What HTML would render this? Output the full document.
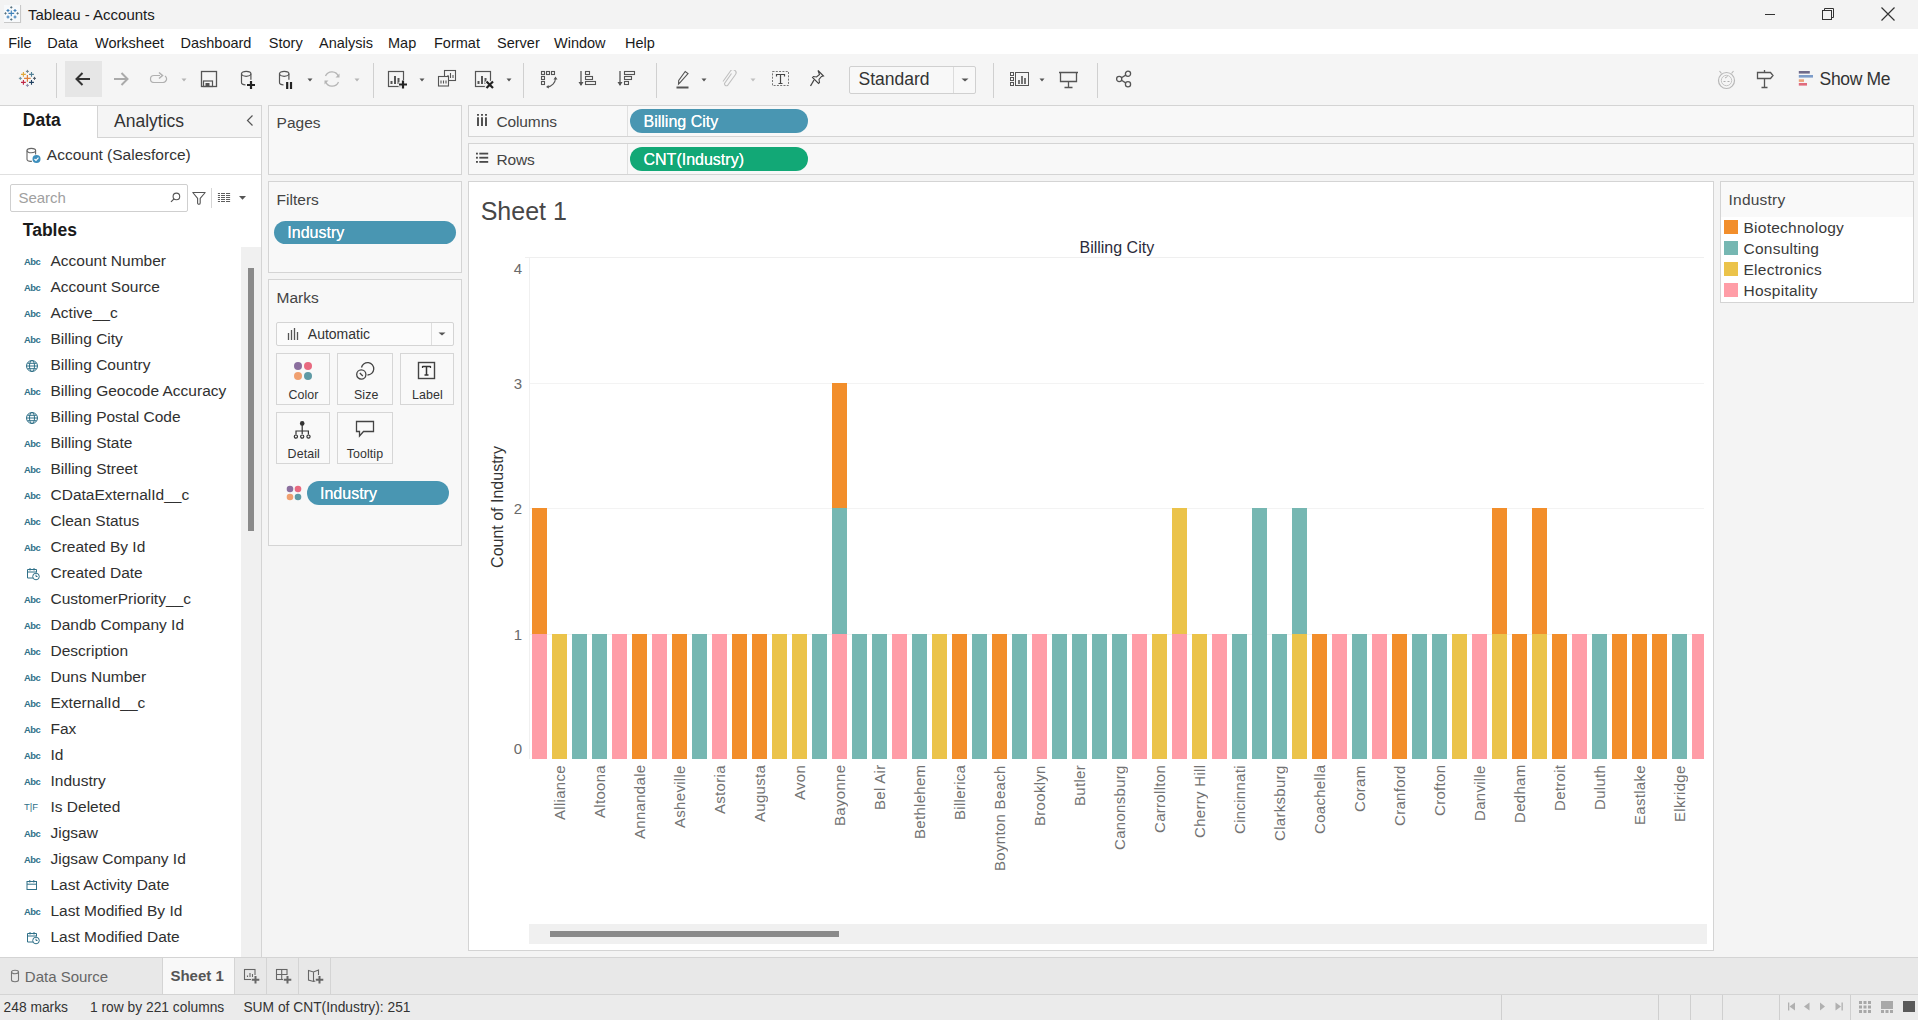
<!DOCTYPE html>
<html><head><meta charset="utf-8"><title>Tableau - Accounts</title>
<style>
html,body{margin:0;padding:0;}
body{width:1918px;height:1020px;position:relative;overflow:hidden;background:#f4f4f4;font-family:"Liberation Sans", sans-serif;}
.a{position:absolute;display:block;}
.t{position:absolute;white-space:nowrap;line-height:1;}
.xl{top:764.5px;height:160px;width:16px;font-size:15px;color:#727272;letter-spacing:0.3px;writing-mode:vertical-rl;transform:rotate(180deg);text-align:end;line-height:16px;}
</style></head><body>
<div class="a" style="left:0px;top:0px;width:1918px;height:29px;background:#f3f3f3;"></div>
<svg class="a" style="left:0px;top:0px;" width="24" height="26" viewBox="0 0 24 26"><path d="M20.5 5v17.5H4" fill="none" stroke="#c8c8c8" stroke-width="1.2"/><rect x="4" y="5" width="16" height="17" fill="#f7f9fb"/><g stroke="#3f80b8" stroke-width="1.1"><path d="M11.3 10.5v5.8M8.4 13.4h5.8"/><path d="M8 9v3M6.5 10.5h3M15 9v3M13.5 10.5h3M8 15.5v3M6.5 17h3M15 15.5v3M13.5 17h3"/></g><g stroke="#56707e" stroke-width="1"><path d="M11.3 6.3v2.2M10.2 7.4h2.2M11.3 18.4v2.2M10.2 19.5h2.2M5.5 12.3v2.2M4.4 13.4h2.2M17.6 12.3v2.2M16.5 13.4h2.2"/></g></svg>
<div class="t" style="top:7.30px;font-size:15px;color:#1a1a1a;left:28px;">Tableau - Accounts</div>
<svg class="a" style="left:1760px;top:6px;" width="20" height="16" viewBox="0 0 20 16"><path d="M5 8.5h10" stroke="#333" stroke-width="1"/></svg>
<svg class="a" style="left:1819px;top:6px;" width="20" height="16" viewBox="0 0 20 16"><rect x="3.5" y="4.5" width="9" height="9" fill="none" stroke="#333"/><path d="M5.5 4.5v-2h9v9h-2" fill="none" stroke="#333"/></svg>
<svg class="a" style="left:1878px;top:5px;" width="20" height="18" viewBox="0 0 20 18"><path d="M3.5 2.5l13 13M16.5 2.5l-13 13" stroke="#333" stroke-width="1.2"/></svg>
<div class="a" style="left:0px;top:29px;width:1918px;height:25px;background:#ffffff;"></div>
<div class="t" style="top:35.73px;font-size:14.5px;color:#1a1a1a;left:8.2px;">File</div>
<div class="t" style="top:35.73px;font-size:14.5px;color:#1a1a1a;left:47.2px;">Data</div>
<div class="t" style="top:35.73px;font-size:14.5px;color:#1a1a1a;left:95px;">Worksheet</div>
<div class="t" style="top:35.73px;font-size:14.5px;color:#1a1a1a;left:180.5px;">Dashboard</div>
<div class="t" style="top:35.73px;font-size:14.5px;color:#1a1a1a;left:268.8px;">Story</div>
<div class="t" style="top:35.73px;font-size:14.5px;color:#1a1a1a;left:319px;">Analysis</div>
<div class="t" style="top:35.73px;font-size:14.5px;color:#1a1a1a;left:388px;">Map</div>
<div class="t" style="top:35.73px;font-size:14.5px;color:#1a1a1a;left:434px;">Format</div>
<div class="t" style="top:35.73px;font-size:14.5px;color:#1a1a1a;left:497px;">Server</div>
<div class="t" style="top:35.73px;font-size:14.5px;color:#1a1a1a;left:554px;">Window</div>
<div class="t" style="top:35.73px;font-size:14.5px;color:#1a1a1a;left:625px;">Help</div>
<div class="a" style="left:0px;top:54px;width:1918px;height:51px;background:#f5f5f5;"></div>
<svg class="a" style="left:14px;top:66px;" width="28" height="24" viewBox="0 0 28 24"><path d="M10.10 12.35h6.60M13.40 9.05v6.60" stroke="#e0803a" stroke-width="1.2"/><path d="M7.00 8.35h4.80M9.40 5.95v4.80" stroke="#e0a83a" stroke-width="1.1"/><path d="M15.10 8.35h4.80M17.50 5.95v4.80" stroke="#4f7f95" stroke-width="1.1"/><path d="M7.00 16.35h4.80M9.40 13.95v4.80" stroke="#c02645" stroke-width="1.1"/><path d="M15.10 16.35h4.80M17.50 13.95v4.80" stroke="#1f3f60" stroke-width="1.1"/><path d="M11.90 5.40h3.00M13.40 3.90v3.00" stroke="#6a7f88" stroke-width="1.0"/><path d="M11.90 19.40h3.00M13.40 17.90v3.00" stroke="#8a8aaa" stroke-width="1.0"/><path d="M4.85 12.35h3.00M6.35 10.85v3.00" stroke="#6a8f9f" stroke-width="1.0"/><path d="M19.00 12.35h3.00M20.50 10.85v3.00" stroke="#4f5a66" stroke-width="1.0"/></svg>
<div class="a" style="left:56px;top:63px;width:1px;height:35px;background:#d0d0d0;"></div>
<div class="a" style="left:65px;top:61px;width:37px;height:36px;background:#e6e6e6;"></div>
<svg class="a" style="left:74px;top:71px;" width="18" height="16" viewBox="0 0 18 16"><path d="M16 8H2.5M8.5 2L2.5 8l6 6" fill="none" stroke="#333" stroke-width="2"/></svg>
<svg class="a" style="left:113px;top:71px;" width="18" height="16" viewBox="0 0 18 16"><path d="M1 8h13.5M8.5 2l6 6-6 6" fill="none" stroke="#aaa" stroke-width="2"/></svg>
<svg class="a" style="left:149px;top:71px;" width="20" height="12" viewBox="0 0 20 12"><path d="M11 4.5H5a3.5 3.5 0 0 0 0 7h9a3.5 3.5 0 0 0 2-6.4" fill="none" stroke="#b0b0b0" stroke-width="1.2"/><path d="M10 1.5l3.5 3-3.5 3" fill="none" stroke="#b0b0b0" stroke-width="1.5"/></svg>
<svg class="a" style="left:179.5px;top:76.5px;" width="8" height="6" viewBox="0 0 8 6"><path d="M1.5 1.5h5l-2.5 3z" fill="#b5b5b5"/></svg>
<svg class="a" style="left:200px;top:70px;" width="18" height="18" viewBox="0 0 18 18"><rect x="1.5" y="1.5" width="15" height="15" fill="none" stroke="#555" stroke-width="1.3"/><rect x="3.5" y="11" width="9" height="5.5" fill="none" stroke="#555" stroke-width="1.2"/><rect x="5.5" y="13" width="4" height="3.5" fill="#555"/></svg>
<svg class="a" style="left:239px;top:69px;" width="18" height="21" viewBox="0 0 18 21"><path d="M2.5 4.5v9a4 2 0 0 0 4 2.3" fill="none" stroke="#555" stroke-width="1.2"/><ellipse cx="7.2" cy="4.8" rx="4.7" ry="2.5" fill="none" stroke="#555" stroke-width="1.2"/><path d="M11.9 4.8v6" stroke="#555" stroke-width="1.2"/><path d="M12 12v8M8 16h8" stroke="#222" stroke-width="2.2"/></svg>
<svg class="a" style="left:277px;top:69px;" width="18" height="21" viewBox="0 0 18 21"><path d="M2.5 4.5v9a4 2 0 0 0 4 2.3" fill="none" stroke="#555" stroke-width="1.2"/><ellipse cx="7.2" cy="4.8" rx="4.7" ry="2.5" fill="none" stroke="#555" stroke-width="1.2"/><path d="M11.9 4.8v6" stroke="#555" stroke-width="1.2"/><path d="M10.2 13v7M14 13v7" stroke="#222" stroke-width="2.2"/></svg>
<svg class="a" style="left:305.5px;top:76.5px;" width="8" height="6" viewBox="0 0 8 6"><path d="M1.5 1.5h5l-2.5 3z" fill="#555"/></svg>
<svg class="a" style="left:322px;top:70px;" width="20" height="18" viewBox="0 0 20 18"><path d="M16.5 6.5A7 7 0 0 0 3.5 6M3.5 11.5A7 7 0 0 0 16.5 12" fill="none" stroke="#b5b5b5" stroke-width="1.3"/><path d="M17.5 3.5v4h-4z M2.5 14.5v-4h4z" fill="#b5b5b5"/></svg>
<svg class="a" style="left:353px;top:76.5px;" width="8" height="6" viewBox="0 0 8 6"><path d="M1.5 1.5h5l-2.5 3z" fill="#b5b5b5"/></svg>
<div class="a" style="left:373px;top:63px;width:1px;height:35px;background:#d0d0d0;"></div>
<svg class="a" style="left:387px;top:70px;" width="22" height="20" viewBox="0 0 22 20"><rect x="1.5" y="1.5" width="15" height="15" fill="none" stroke="#555" stroke-width="1.2"/><path d="M4.5 14v-3M8 14V6M11.5 14v-6" stroke="#555" stroke-width="2"/><path d="M16 10v9M11.5 14.5h9" stroke="#f5f5f5" stroke-width="4.5"/><path d="M16 10.5v8M12 14.5h8" stroke="#222" stroke-width="2.2"/></svg>
<svg class="a" style="left:417.5px;top:76.5px;" width="8" height="6" viewBox="0 0 8 6"><path d="M1.5 1.5h5l-2.5 3z" fill="#555"/></svg>
<svg class="a" style="left:437px;top:69px;" width="20" height="19" viewBox="0 0 20 19"><rect x="7.5" y="1.5" width="11" height="10" fill="#f5f5f5" stroke="#555" stroke-width="1.1"/><path d="M11 9V6M13.5 9V4M16 9V6" stroke="#555" stroke-width="1.1"/><rect x="1.5" y="7.5" width="10" height="9.5" fill="#f5f5f5" stroke="#555" stroke-width="1.1"/><path d="M4 14.5v-3M6.5 14.5v-3M9 14.5v-3" stroke="#555" stroke-width="1.1"/></svg>
<svg class="a" style="left:474px;top:70px;" width="22" height="20" viewBox="0 0 22 20"><rect x="1.5" y="1.5" width="15" height="15" fill="none" stroke="#555" stroke-width="1.2"/><path d="M4.5 14v-3M8 14V6M11.5 14v-6" stroke="#555" stroke-width="2"/><path d="M12 11l7.5 7.5M19.5 11L12 18.5" stroke="#f5f5f5" stroke-width="4.5"/><path d="M12.5 11.5l6.5 6.5M19 11.5l-6.5 6.5" stroke="#222" stroke-width="2.2"/></svg>
<svg class="a" style="left:504.5px;top:76.5px;" width="8" height="6" viewBox="0 0 8 6"><path d="M1.5 1.5h5l-2.5 3z" fill="#555"/></svg>
<div class="a" style="left:523px;top:63px;width:1px;height:35px;background:#d0d0d0;"></div>
<svg class="a" style="left:540px;top:70px;" width="19" height="20" viewBox="0 0 19 20"><g fill="none" stroke="#555" stroke-width="1.1"><rect x="1.5" y="1.5" width="3" height="3"/><rect x="6.5" y="1.5" width="3" height="3"/><rect x="11.5" y="1.5" width="3" height="3"/><rect x="1.5" y="6.5" width="3" height="3"/><rect x="1.5" y="11.5" width="3" height="3"/><path d="M15.5 8.5a9 9 0 0 1-8 8.5"/></g><path d="M13.5 9.5l2-3 2 3zM8.5 15l-2.5 2 3 1.5z" fill="#555"/></svg>
<svg class="a" style="left:578px;top:70px;" width="20" height="18" viewBox="0 0 20 18"><path d="M3 1v14" stroke="#555" stroke-width="1.3"/><path d="M0.5 12l2.5 4 2.5-4z" fill="#555"/><g fill="none" stroke="#555" stroke-width="1.1"><rect x="7.5" y="1.5" width="4" height="3"/><rect x="7.5" y="6.5" width="7" height="3"/><rect x="7.5" y="11.5" width="10" height="3"/></g></svg>
<svg class="a" style="left:617px;top:70px;" width="20" height="18" viewBox="0 0 20 18"><path d="M3 1v14" stroke="#555" stroke-width="1.3"/><path d="M0.5 12l2.5 4 2.5-4z" fill="#555"/><g fill="none" stroke="#555" stroke-width="1.1"><rect x="7.5" y="1.5" width="10" height="3"/><rect x="7.5" y="6.5" width="7" height="3"/><rect x="7.5" y="11.5" width="4" height="3"/></g></svg>
<div class="a" style="left:656px;top:63px;width:1px;height:35px;background:#d0d0d0;"></div>
<svg class="a" style="left:675px;top:70px;" width="16" height="20" viewBox="0 0 16 20"><path d="M5 12.5l-1.5 1.5 0.2-3.5 6.5-9 2.8 2z" fill="none" stroke="#555" stroke-width="1.1"/><path d="M1.5 17.5h12" stroke="#555" stroke-width="2"/></svg>
<svg class="a" style="left:700px;top:76.5px;" width="8" height="6" viewBox="0 0 8 6"><path d="M1.5 1.5h5l-2.5 3z" fill="#555"/></svg>
<svg class="a" style="left:721px;top:70px;" width="16" height="18" viewBox="0 0 16 18"><path d="M10.5 3.5l-7 10a2 2 0 0 0 3 2l8-11a3 3 0 0 0-5-3.5l-7.5 10.5" fill="none" stroke="#c0c0c0" stroke-width="1.1"/></svg>
<svg class="a" style="left:749px;top:76.5px;" width="8" height="6" viewBox="0 0 8 6"><path d="M1.5 1.5h5l-2.5 3z" fill="#c0c0c0"/></svg>
<svg class="a" style="left:771px;top:70px;" width="19" height="17" viewBox="0 0 19 17"><rect x="1.5" y="1.5" width="16" height="14" fill="none" stroke="#777" stroke-width="1" stroke-dasharray="2 1.3"/><path d="M5.5 4.5h8M9.5 4.5v9M7.5 13.5h4M5.5 4v2.5M13.5 4v2.5" stroke="#444" stroke-width="1.2" fill="none"/></svg>
<svg class="a" style="left:809px;top:69px;" width="16" height="19" viewBox="0 0 16 19"><path d="M9 1.5l5.5 5.5-2 0.5-2.5 3 0.5 3-1 1-6-6 1-1 3 0.5 3-2.5z" fill="none" stroke="#444" stroke-width="1.1"/><path d="M5 11l-3.5 6" stroke="#444" stroke-width="1.3"/></svg>
<div class="a" style="left:849px;top:66px;width:127px;height:28px;background:#f8f8f8;box-sizing:border-box;border:1px solid #d0d0d0;border-radius:2px;"></div>
<div class="a" style="left:953px;top:67px;width:1px;height:26px;background:#dcdcdc;"></div>
<div class="t" style="top:71.19px;font-size:17.5px;color:#333;left:858.5px;">Standard</div>
<svg class="a" style="left:960.5px;top:77px;" width="8" height="6" viewBox="0 0 8 6"><path d="M0.5 1.5h7l-3.5 3z" fill="#555"/></svg>
<div class="a" style="left:993px;top:63px;width:1px;height:35px;background:#d0d0d0;"></div>
<svg class="a" style="left:1008px;top:70px;" width="24" height="18" viewBox="0 0 24 18"><g fill="none" stroke="#555" stroke-width="1"><rect x="2.5" y="2.5" width="3" height="3"/><rect x="2.5" y="7.5" width="3" height="3"/><rect x="2.5" y="12.5" width="3" height="3"/><rect x="7.5" y="2.5" width="13" height="13"/></g><path d="M11 14v-4M14 14V6M17 14v-6" stroke="#555" stroke-width="1.6"/></svg>
<svg class="a" style="left:1037.5px;top:76.5px;" width="8" height="6" viewBox="0 0 8 6"><path d="M1.5 1.5h5l-2.5 3z" fill="#555"/></svg>
<svg class="a" style="left:1058px;top:70px;" width="21" height="19" viewBox="0 0 21 19"><path d="M1 2.5h19M2.5 2.5v9h16v-9M10.5 11.5v6M6.5 17.5h8" fill="none" stroke="#555" stroke-width="1.3"/></svg>
<div class="a" style="left:1097px;top:63px;width:1px;height:35px;background:#d0d0d0;"></div>
<svg class="a" style="left:1115px;top:70px;" width="18" height="18" viewBox="0 0 18 18"><g fill="none" stroke="#555" stroke-width="1.3"><circle cx="13" cy="3.8" r="2.6"/><circle cx="4.2" cy="9" r="2.6"/><circle cx="13" cy="14.2" r="2.6"/><path d="M6.5 7.7l4.2-2.6M6.5 10.3l4.2 2.6"/></g></svg>
<svg class="a" style="left:1716px;top:69px;" width="21" height="21" viewBox="0 0 21 21"><circle cx="10.5" cy="11.5" r="8" fill="none" stroke="#b8b8b8" stroke-width="1.2"/><path d="M3.5 2l2 2.5M17.5 2l-2 2.5" stroke="#b8b8b8" stroke-width="1.2"/><circle cx="10.5" cy="11.5" r="5.2" fill="none" stroke="#c4c4c4" stroke-width="1"/><path d="M7.5 12.5h2M11.5 12.5h2M9 9l2.5-1.5" stroke="#b0b0b0" stroke-width="1"/></svg>
<svg class="a" style="left:1755px;top:69px;" width="20" height="20" viewBox="0 0 20 20"><path d="M2.5 3.5h13l2.5 3-2.5 3h-13z" fill="none" stroke="#555" stroke-width="1.3"/><path d="M9.5 1v2.5M9.5 9.5v9M6.5 18.5h6" stroke="#555" stroke-width="1.3"/></svg>
<svg class="a" style="left:1797px;top:70px;" width="18" height="18" viewBox="0 0 18 18"><rect x="1.8" y="1" width="11" height="2.6" fill="#6f6a8a"/><rect x="1.8" y="5" width="14.2" height="2.6" fill="#7d9cc9"/><rect x="1.8" y="9.3" width="5.2" height="2.6" fill="#eba27a"/><rect x="1.8" y="13" width="8.2" height="2.6" fill="#e06b7d"/></svg>
<div class="t" style="top:71.39px;font-size:17.5px;color:#333;left:1819.6px;letter-spacing:-0.35px;">Show Me</div>
<div class="a" style="left:0px;top:105px;width:1918px;height:852px;background:#f4f4f4;"></div>
<div class="a" style="left:0px;top:105px;width:262px;height:852px;background:#ffffff;box-sizing:border-box;border:1px solid #d4d4d4;border-left:none;border-bottom:none;"></div>
<div class="a" style="left:97px;top:106px;width:164px;height:32px;background:#f5f5f5;box-sizing:border-box;border-left:1px solid #d4d4d4;border-bottom:1px solid #d4d4d4;"></div>
<div class="t" style="top:112.19px;font-size:17.5px;color:#1a1a1a;font-weight:bold;left:22.8px;">Data</div>
<div class="t" style="top:112.69px;font-size:17.5px;color:#333;left:114px;">Analytics</div>
<svg class="a" style="left:245px;top:114px;" width="10" height="13" viewBox="0 0 10 13"><path d="M7.5 1.5L2.5 6.5l5 5" fill="none" stroke="#555" stroke-width="1.2"/></svg>
<svg class="a" style="left:25px;top:147px;" width="17" height="17" viewBox="0 0 17 17"><path d="M2 3.5v9a4.3 2 0 0 0 5 1.8" fill="none" stroke="#666" stroke-width="1.1"/><ellipse cx="6.3" cy="3.6" rx="4.3" ry="2.2" fill="none" stroke="#666" stroke-width="1.1"/><path d="M10.6 3.6v4" stroke="#666" stroke-width="1.1"/><circle cx="11.5" cy="12" r="4" fill="#3d8fbd"/><path d="M9.5 12l1.5 1.5 2.5-2.8" fill="none" stroke="#fff" stroke-width="1.2"/></svg>
<div class="t" style="top:147.48px;font-size:15.5px;color:#333;left:46.8px;">Account (Salesforce)</div>
<div class="a" style="left:0px;top:174px;width:261px;height:1px;background:#e0e0e0;"></div>
<div class="a" style="left:10px;top:184px;width:178px;height:28px;background:#ffffff;box-sizing:border-box;border:1px solid #cfcfcf;border-radius:2px;"></div>
<div class="t" style="top:190.30px;font-size:15px;color:#a0a0a0;left:18.4px;">Search</div>
<svg class="a" style="left:169px;top:191px;" width="13" height="13" viewBox="0 0 13 13"><circle cx="7.4" cy="5.4" r="3.3" fill="none" stroke="#555" stroke-width="1.1"/><path d="M5 7.8L2 10.8" stroke="#555" stroke-width="1.2"/></svg>
<svg class="a" style="left:191px;top:191px;" width="16" height="14" viewBox="0 0 16 14"><path d="M1.8 1.5h12.4l-5 5.8v4.6a1.3 1.3 0 0 1-2.6 0V7.3z" fill="none" stroke="#555" stroke-width="1.1" stroke-linejoin="round"/></svg>
<div class="a" style="left:211px;top:188px;width:1px;height:20px;background:#d6d6d6;"></div>
<svg class="a" style="left:217px;top:192px;" width="14" height="11" viewBox="0 0 14 11"><g fill="#555"><rect x="0.9" y="1.05" width="2.1" height="0.95"/><rect x="4" y="1.05" width="4" height="0.95"/><rect x="9" y="1.05" width="4.1" height="0.95"/><rect x="0.9" y="3.05" width="2.1" height="0.95"/><rect x="4" y="3.05" width="4" height="0.95"/><rect x="9" y="3.05" width="4.1" height="0.95"/><rect x="0.9" y="5.05" width="2.1" height="0.95"/><rect x="4" y="5.05" width="4" height="0.95"/><rect x="9" y="5.05" width="4.1" height="0.95"/><rect x="0.9" y="7.05" width="2.1" height="0.95"/><rect x="4" y="7.05" width="4" height="0.95"/><rect x="9" y="7.05" width="4.1" height="0.95"/><rect x="0.9" y="9.05" width="2.1" height="0.95"/><rect x="4" y="9.05" width="4" height="0.95"/><rect x="9" y="9.05" width="4.1" height="0.95"/></g></svg>
<svg class="a" style="left:238px;top:195px;" width="9" height="6" viewBox="0 0 9 6"><path d="M1 1h7l-3.5 3.8z" fill="#555"/></svg>
<div class="t" style="top:221.99px;font-size:17.5px;color:#1a1a1a;font-weight:bold;left:22.8px;">Tables</div>
<div class="a" style="left:241px;top:247px;width:20px;height:710px;background:#f0f0f0;"></div>
<div class="a" style="left:248px;top:268px;width:6px;height:263px;background:#8a8a8a;"></div>
<div class="t" style="top:252.68px;font-size:15.5px;color:#303030;left:50.5px;">Account Number</div>
<div class="t" style="top:256.54px;font-size:9.4px;color:#2f7088;font-weight:bold;left:24px;letter-spacing:-0.55px;">Abc</div>
<div class="t" style="top:278.68px;font-size:15.5px;color:#303030;left:50.5px;">Account Source</div>
<div class="t" style="top:282.54px;font-size:9.4px;color:#2f7088;font-weight:bold;left:24px;letter-spacing:-0.55px;">Abc</div>
<div class="t" style="top:304.68px;font-size:15.5px;color:#303030;left:50.5px;">Active__c</div>
<div class="t" style="top:308.54px;font-size:9.4px;color:#2f7088;font-weight:bold;left:24px;letter-spacing:-0.55px;">Abc</div>
<div class="t" style="top:330.68px;font-size:15.5px;color:#303030;left:50.5px;">Billing City</div>
<div class="t" style="top:334.54px;font-size:9.4px;color:#2f7088;font-weight:bold;left:24px;letter-spacing:-0.55px;">Abc</div>
<div class="t" style="top:356.68px;font-size:15.5px;color:#303030;left:50.5px;">Billing Country</div>
<svg class="a" style="left:25px;top:358.8px;" width="14" height="14" viewBox="0 0 14 14"><g fill="none" stroke="#2f7088" stroke-width="1"><circle cx="7" cy="7" r="5.5"/><ellipse cx="7" cy="7" rx="2.5" ry="5.5"/><path d="M1.5 7h11M2.5 4.3h9M2.5 9.7h9"/></g></svg>
<div class="t" style="top:382.68px;font-size:15.5px;color:#303030;left:50.5px;">Billing Geocode Accuracy</div>
<div class="t" style="top:386.54px;font-size:9.4px;color:#2f7088;font-weight:bold;left:24px;letter-spacing:-0.55px;">Abc</div>
<div class="t" style="top:408.68px;font-size:15.5px;color:#303030;left:50.5px;">Billing Postal Code</div>
<svg class="a" style="left:25px;top:410.8px;" width="14" height="14" viewBox="0 0 14 14"><g fill="none" stroke="#2f7088" stroke-width="1"><circle cx="7" cy="7" r="5.5"/><ellipse cx="7" cy="7" rx="2.5" ry="5.5"/><path d="M1.5 7h11M2.5 4.3h9M2.5 9.7h9"/></g></svg>
<div class="t" style="top:434.68px;font-size:15.5px;color:#303030;left:50.5px;">Billing State</div>
<div class="t" style="top:438.54px;font-size:9.4px;color:#2f7088;font-weight:bold;left:24px;letter-spacing:-0.55px;">Abc</div>
<div class="t" style="top:460.68px;font-size:15.5px;color:#303030;left:50.5px;">Billing Street</div>
<div class="t" style="top:464.54px;font-size:9.4px;color:#2f7088;font-weight:bold;left:24px;letter-spacing:-0.55px;">Abc</div>
<div class="t" style="top:486.68px;font-size:15.5px;color:#303030;left:50.5px;">CDataExternalId__c</div>
<div class="t" style="top:490.54px;font-size:9.4px;color:#2f7088;font-weight:bold;left:24px;letter-spacing:-0.55px;">Abc</div>
<div class="t" style="top:512.68px;font-size:15.5px;color:#303030;left:50.5px;">Clean Status</div>
<div class="t" style="top:516.54px;font-size:9.4px;color:#2f7088;font-weight:bold;left:24px;letter-spacing:-0.55px;">Abc</div>
<div class="t" style="top:538.68px;font-size:15.5px;color:#303030;left:50.5px;">Created By Id</div>
<div class="t" style="top:542.54px;font-size:9.4px;color:#2f7088;font-weight:bold;left:24px;letter-spacing:-0.55px;">Abc</div>
<div class="t" style="top:564.68px;font-size:15.5px;color:#303030;left:50.5px;">Created Date</div>
<svg class="a" style="left:25px;top:565.8px;" width="16" height="15" viewBox="0 0 16 15"><g fill="none" stroke="#2f7088" stroke-width="1"><path d="M8 12H2.5V3.5h9v3"/><path d="M2.5 6h9M5 2v2.5M9 2v2.5"/><circle cx="11" cy="10.5" r="3.3"/><path d="M11 8.7v1.8h1.5"/></g></svg>
<div class="t" style="top:590.68px;font-size:15.5px;color:#303030;left:50.5px;">CustomerPriority__c</div>
<div class="t" style="top:594.54px;font-size:9.4px;color:#2f7088;font-weight:bold;left:24px;letter-spacing:-0.55px;">Abc</div>
<div class="t" style="top:616.68px;font-size:15.5px;color:#303030;left:50.5px;">Dandb Company Id</div>
<div class="t" style="top:620.54px;font-size:9.4px;color:#2f7088;font-weight:bold;left:24px;letter-spacing:-0.55px;">Abc</div>
<div class="t" style="top:642.68px;font-size:15.5px;color:#303030;left:50.5px;">Description</div>
<div class="t" style="top:646.54px;font-size:9.4px;color:#2f7088;font-weight:bold;left:24px;letter-spacing:-0.55px;">Abc</div>
<div class="t" style="top:668.68px;font-size:15.5px;color:#303030;left:50.5px;">Duns Number</div>
<div class="t" style="top:672.54px;font-size:9.4px;color:#2f7088;font-weight:bold;left:24px;letter-spacing:-0.55px;">Abc</div>
<div class="t" style="top:694.68px;font-size:15.5px;color:#303030;left:50.5px;">ExternalId__c</div>
<div class="t" style="top:698.54px;font-size:9.4px;color:#2f7088;font-weight:bold;left:24px;letter-spacing:-0.55px;">Abc</div>
<div class="t" style="top:720.68px;font-size:15.5px;color:#303030;left:50.5px;">Fax</div>
<div class="t" style="top:724.54px;font-size:9.4px;color:#2f7088;font-weight:bold;left:24px;letter-spacing:-0.55px;">Abc</div>
<div class="t" style="top:746.68px;font-size:15.5px;color:#303030;left:50.5px;">Id</div>
<div class="t" style="top:750.54px;font-size:9.4px;color:#2f7088;font-weight:bold;left:24px;letter-spacing:-0.55px;">Abc</div>
<div class="t" style="top:772.68px;font-size:15.5px;color:#303030;left:50.5px;">Industry</div>
<div class="t" style="top:776.54px;font-size:9.4px;color:#2f7088;font-weight:bold;left:24px;letter-spacing:-0.55px;">Abc</div>
<div class="t" style="top:798.68px;font-size:15.5px;color:#303030;left:50.5px;">Is Deleted</div>
<div class="t" style="top:802.16px;font-size:9.5px;color:#2f7088;left:24px;letter-spacing:0px;">T|F</div>
<div class="t" style="top:824.68px;font-size:15.5px;color:#303030;left:50.5px;">Jigsaw</div>
<div class="t" style="top:828.54px;font-size:9.4px;color:#2f7088;font-weight:bold;left:24px;letter-spacing:-0.55px;">Abc</div>
<div class="t" style="top:850.68px;font-size:15.5px;color:#303030;left:50.5px;">Jigsaw Company Id</div>
<div class="t" style="top:854.54px;font-size:9.4px;color:#2f7088;font-weight:bold;left:24px;letter-spacing:-0.55px;">Abc</div>
<div class="t" style="top:876.68px;font-size:15.5px;color:#303030;left:50.5px;">Last Activity Date</div>
<svg class="a" style="left:25px;top:877.8px;" width="14" height="14" viewBox="0 0 14 14"><g fill="none" stroke="#2f7088" stroke-width="1"><rect x="2" y="3.5" width="9.5" height="8"/><path d="M2 6.2h9.5M4.8 2v2.5M8.8 2v2.5"/></g></svg>
<div class="t" style="top:902.68px;font-size:15.5px;color:#303030;left:50.5px;">Last Modified By Id</div>
<div class="t" style="top:906.54px;font-size:9.4px;color:#2f7088;font-weight:bold;left:24px;letter-spacing:-0.55px;">Abc</div>
<div class="t" style="top:928.68px;font-size:15.5px;color:#303030;left:50.5px;">Last Modified Date</div>
<svg class="a" style="left:25px;top:929.8px;" width="16" height="15" viewBox="0 0 16 15"><g fill="none" stroke="#2f7088" stroke-width="1"><path d="M8 12H2.5V3.5h9v3"/><path d="M2.5 6h9M5 2v2.5M9 2v2.5"/><circle cx="11" cy="10.5" r="3.3"/><path d="M11 8.7v1.8h1.5"/></g></svg>
<div class="a" style="left:268px;top:105px;width:194px;height:70px;background:#f8f8f8;box-sizing:border-box;border:1px solid #d4d4d4;"></div>
<div class="t" style="top:114.88px;font-size:15.5px;color:#444;left:276.6px;">Pages</div>
<div class="a" style="left:268px;top:181px;width:194px;height:92px;background:#f8f8f8;box-sizing:border-box;border:1px solid #d4d4d4;"></div>
<div class="t" style="top:191.88px;font-size:15.5px;color:#444;left:276.6px;">Filters</div>
<div class="a" style="left:274px;top:220.5px;width:182px;height:23px;background:#4996b2;border-radius:11.5px;"></div>
<div class="t" style="top:224.76px;font-size:16px;color:#ffffff;left:287.3px;text-shadow:0 0 0.4px #fff;">Industry</div>
<div class="a" style="left:268px;top:279px;width:194px;height:267px;background:#f8f8f8;box-sizing:border-box;border:1px solid #d4d4d4;"></div>
<div class="t" style="top:290.38px;font-size:15.5px;color:#444;left:276.5px;">Marks</div>
<div class="a" style="left:276px;top:322px;width:178px;height:24px;background:#fbfbfb;box-sizing:border-box;border:1px solid #d4d4d4;border-radius:2px;"></div>
<div class="a" style="left:431px;top:323px;width:1px;height:22px;background:#dedede;"></div>
<svg class="a" style="left:287px;top:327px;" width="13" height="14" viewBox="0 0 13 14"><path d="M1.5 13V6M4.5 13V3M7.5 13V1M10.5 13V5" stroke="#555" stroke-width="1.3"/></svg>
<div class="t" style="top:327.45px;font-size:14px;color:#333;left:307.8px;">Automatic</div>
<svg class="a" style="left:438px;top:331px;" width="8" height="6" viewBox="0 0 8 6"><path d="M0.5 1.5h7l-3.5 3z" fill="#555"/></svg>
<div class="a" style="left:276px;top:353px;width:54px;height:52px;background:#f9f9f9;box-sizing:border-box;border:1px solid #d6d6d6;"></div>
<div class="t" style="top:388.50px;font-size:12.4px;color:#333;left:288.4px;letter-spacing:0.1px;">Color</div>

<svg class="a" style="left:293px;top:361px;" width="20" height="20" viewBox="0 0 20 20"><circle cx="5" cy="5" r="4" fill="#8b6f9e"/><circle cx="15" cy="5" r="4" fill="#e86a80"/><circle cx="5" cy="15" r="4" fill="#f0a070"/><circle cx="15" cy="15" r="4" fill="#5f9aa5"/></svg>
<div class="a" style="left:337px;top:353px;width:56px;height:52px;background:#f9f9f9;box-sizing:border-box;border:1px solid #d6d6d6;"></div>
<div class="t" style="top:388.50px;font-size:12.4px;color:#333;left:354px;letter-spacing:0.1px;">Size</div>

<svg class="a" style="left:355px;top:361px;" width="20" height="20" viewBox="0 0 20 20"><path d="M6.5 6.5A6.2 6.2 0 1 1 12.5 14" fill="none" stroke="#444" stroke-width="1.3"/><circle cx="6.3" cy="13.5" r="4.6" fill="none" stroke="#444" stroke-width="1.3"/><path d="M4.8 12l3 3" stroke="#444" stroke-width="1.2"/></svg>
<div class="a" style="left:400px;top:353px;width:54px;height:52px;background:#f9f9f9;box-sizing:border-box;border:1px solid #d6d6d6;"></div>
<div class="t" style="top:388.50px;font-size:12.4px;color:#333;left:412px;letter-spacing:0.1px;">Label</div>

<svg class="a" style="left:417px;top:361px;" width="19" height="19" viewBox="0 0 19 19"><rect x="1.5" y="1.5" width="16" height="16" fill="none" stroke="#444" stroke-width="1.4"/><path d="M5.5 5.5h8M9.5 5.5v8.5M7.5 14h4" fill="none" stroke="#333" stroke-width="1.5"/><path d="M5.5 5v2M13.5 5v2" stroke="#333" stroke-width="1.2"/></svg>
<div class="a" style="left:276px;top:412px;width:54px;height:52px;background:#f9f9f9;box-sizing:border-box;border:1px solid #d6d6d6;"></div>
<div class="t" style="top:447.50px;font-size:12.4px;color:#333;left:287.6px;letter-spacing:0.1px;">Detail</div>

<svg class="a" style="left:292px;top:419px;" width="20" height="21" viewBox="0 0 20 21"><circle cx="10.2" cy="4.4" r="2.3" fill="#333"/><path d="M10.2 6v9M4 15.5v-3.5h12.4v3.5" fill="none" stroke="#333" stroke-width="1.2"/><circle cx="3.9" cy="17.6" r="1.6" fill="none" stroke="#333" stroke-width="1.2"/><circle cx="10.2" cy="17.6" r="1.6" fill="none" stroke="#333" stroke-width="1.2"/><circle cx="16.5" cy="17.6" r="1.6" fill="none" stroke="#333" stroke-width="1.2"/></svg>
<div class="a" style="left:337px;top:412px;width:56px;height:52px;background:#f9f9f9;box-sizing:border-box;border:1px solid #d6d6d6;"></div>
<div class="t" style="top:447.50px;font-size:12.4px;color:#333;left:346.7px;letter-spacing:0.1px;">Tooltip</div>

<svg class="a" style="left:355px;top:420px;" width="20" height="18" viewBox="0 0 20 18"><path d="M1.5 1.5h17v10h-10l-4 4.5v-4.5h-3z" fill="none" stroke="#444" stroke-width="1.3"/></svg>
<svg class="a" style="left:286px;top:485px;" width="16" height="16" viewBox="0 0 16 16"><circle cx="4" cy="4" r="3.3" fill="#8b6f9e"/><circle cx="12" cy="4" r="3.3" fill="#e86a80"/><circle cx="4" cy="12" r="3.3" fill="#f0a070"/><circle cx="12" cy="12" r="3.3" fill="#5f9aa5"/></svg>
<div class="a" style="left:307px;top:481px;width:142px;height:24px;background:#4996b2;border-radius:12.0px;"></div>
<div class="t" style="top:485.76px;font-size:16px;color:#ffffff;left:320px;text-shadow:0 0 0.4px #fff;">Industry</div>
<div class="a" style="left:468px;top:105px;width:1446px;height:32px;background:#f8f8f8;box-sizing:border-box;border:1px solid #d4d4d4;"></div>
<div class="a" style="left:627px;top:106px;width:1px;height:30px;background:#e0e0e0;"></div>
<svg class="a" style="left:476px;top:113px;" width="12" height="14" viewBox="0 0 12 14"><path d="M2 4.2v8.8M6 4.2v8.8M10 4.2v8.8" stroke="#4a4a4a" stroke-width="1.9"/><path d="M2 1v1.7M6 1v1.7M10 1v1.7" stroke="#4a4a4a" stroke-width="1.9"/></svg>
<div class="t" style="top:113.88px;font-size:15.5px;color:#444;left:496.4px;letter-spacing:-0.1px;">Columns</div>
<div class="a" style="left:630px;top:109px;width:178px;height:24px;background:#4996b2;border-radius:12.0px;"></div>
<div class="t" style="top:113.76px;font-size:16px;color:#ffffff;left:643.5px;text-shadow:0 0 0.4px #fff;">Billing City</div>
<div class="a" style="left:468px;top:143px;width:1446px;height:32px;background:#f8f8f8;box-sizing:border-box;border:1px solid #d4d4d4;"></div>
<div class="a" style="left:627px;top:144px;width:1px;height:30px;background:#e0e0e0;"></div>
<svg class="a" style="left:476px;top:152px;" width="14" height="12" viewBox="0 0 14 12"><g fill="#4a4a4a"><rect x="0" y="0.7" width="1.9" height="1.8"/><rect x="3.3" y="0.7" width="8.9" height="1.8"/><rect x="0" y="4.8" width="1.9" height="1.8"/><rect x="3.3" y="4.8" width="8.9" height="1.8"/><rect x="0" y="9" width="1.9" height="1.8"/><rect x="3.3" y="9" width="8.9" height="1.8"/></g></svg>
<div class="t" style="top:151.88px;font-size:15.5px;color:#444;left:496.4px;letter-spacing:-0.1px;">Rows</div>
<div class="a" style="left:630px;top:147px;width:178px;height:24px;background:#12a876;border-radius:12.0px;"></div>
<div class="t" style="top:151.76px;font-size:16px;color:#ffffff;left:643.5px;text-shadow:0 0 0.4px #fff;">CNT(Industry)</div>
<div class="a" style="left:468px;top:181px;width:1246px;height:770px;background:#ffffff;box-sizing:border-box;border:1px solid #d4d4d4;"></div>
<div class="t" style="top:199.34px;font-size:25px;color:#474747;left:480.7px;">Sheet 1</div>
<div class="t" style="top:240.26px;font-size:16px;color:#2b2b3b;left:616.8px;width:1000px;text-align:center;">Billing City</div>
<div class="a" style="left:525px;top:257px;width:1179px;height:1px;background:#efefef;"></div>
<div class="a" style="left:529px;top:634px;width:1175px;height:1px;background:#f3f3f3;"></div>
<div class="a" style="left:529px;top:508px;width:1175px;height:1px;background:#f3f3f3;"></div>
<div class="a" style="left:529px;top:383px;width:1175px;height:1px;background:#f3f3f3;"></div>
<div class="a" style="left:529px;top:258px;width:1px;height:501px;background:#f0f0f0;"></div>
<div class="t" style="top:261.30px;font-size:15px;color:#6a6a6a;right:1396px;">4</div>
<div class="t" style="top:376.00px;font-size:15px;color:#6a6a6a;right:1396px;">3</div>
<div class="t" style="top:501.30px;font-size:15px;color:#6a6a6a;right:1396px;">2</div>
<div class="t" style="top:626.60px;font-size:15px;color:#6a6a6a;right:1396px;">1</div>
<div class="t" style="top:740.90px;font-size:15px;color:#6a6a6a;right:1396px;">0</div>
<div class="t" style="left:498px;top:506.8px;font-size:16px;color:#333;transform:translate(-50%,-50%) rotate(-90deg);white-space:nowrap;line-height:16px;">Count of Industry</div>
<div class="a" style="left:532px;top:634px;width:15px;height:125px;background:#ff9da7;"></div>
<div class="a" style="left:532px;top:508px;width:15px;height:126px;background:#f28e2b;"></div>
<div class="a" style="left:552px;top:634px;width:15px;height:125px;background:#ebc34a;"></div>
<div class="a" style="left:572px;top:634px;width:15px;height:125px;background:#76b7b2;"></div>
<div class="a" style="left:592px;top:634px;width:15px;height:125px;background:#76b7b2;"></div>
<div class="a" style="left:612px;top:634px;width:15px;height:125px;background:#ff9da7;"></div>
<div class="a" style="left:632px;top:634px;width:15px;height:125px;background:#f28e2b;"></div>
<div class="a" style="left:652px;top:634px;width:15px;height:125px;background:#ff9da7;"></div>
<div class="a" style="left:672px;top:634px;width:15px;height:125px;background:#f28e2b;"></div>
<div class="a" style="left:692px;top:634px;width:15px;height:125px;background:#76b7b2;"></div>
<div class="a" style="left:712px;top:634px;width:15px;height:125px;background:#ff9da7;"></div>
<div class="a" style="left:732px;top:634px;width:15px;height:125px;background:#f28e2b;"></div>
<div class="a" style="left:752px;top:634px;width:15px;height:125px;background:#f28e2b;"></div>
<div class="a" style="left:772px;top:634px;width:15px;height:125px;background:#ebc34a;"></div>
<div class="a" style="left:792px;top:634px;width:15px;height:125px;background:#ebc34a;"></div>
<div class="a" style="left:812px;top:634px;width:15px;height:125px;background:#76b7b2;"></div>
<div class="a" style="left:832px;top:634px;width:15px;height:125px;background:#ff9da7;"></div>
<div class="a" style="left:832px;top:508px;width:15px;height:126px;background:#76b7b2;"></div>
<div class="a" style="left:832px;top:383px;width:15px;height:125px;background:#f28e2b;"></div>
<div class="a" style="left:852px;top:634px;width:15px;height:125px;background:#76b7b2;"></div>
<div class="a" style="left:872px;top:634px;width:15px;height:125px;background:#76b7b2;"></div>
<div class="a" style="left:892px;top:634px;width:15px;height:125px;background:#ff9da7;"></div>
<div class="a" style="left:912px;top:634px;width:15px;height:125px;background:#76b7b2;"></div>
<div class="a" style="left:932px;top:634px;width:15px;height:125px;background:#ebc34a;"></div>
<div class="a" style="left:952px;top:634px;width:15px;height:125px;background:#f28e2b;"></div>
<div class="a" style="left:972px;top:634px;width:15px;height:125px;background:#76b7b2;"></div>
<div class="a" style="left:992px;top:634px;width:15px;height:125px;background:#f28e2b;"></div>
<div class="a" style="left:1012px;top:634px;width:15px;height:125px;background:#76b7b2;"></div>
<div class="a" style="left:1032px;top:634px;width:15px;height:125px;background:#ff9da7;"></div>
<div class="a" style="left:1052px;top:634px;width:15px;height:125px;background:#76b7b2;"></div>
<div class="a" style="left:1072px;top:634px;width:15px;height:125px;background:#76b7b2;"></div>
<div class="a" style="left:1092px;top:634px;width:15px;height:125px;background:#76b7b2;"></div>
<div class="a" style="left:1112px;top:634px;width:15px;height:125px;background:#76b7b2;"></div>
<div class="a" style="left:1132px;top:634px;width:15px;height:125px;background:#ff9da7;"></div>
<div class="a" style="left:1152px;top:634px;width:15px;height:125px;background:#ebc34a;"></div>
<div class="a" style="left:1172px;top:634px;width:15px;height:125px;background:#ff9da7;"></div>
<div class="a" style="left:1172px;top:508px;width:15px;height:126px;background:#ebc34a;"></div>
<div class="a" style="left:1192px;top:634px;width:15px;height:125px;background:#ebc34a;"></div>
<div class="a" style="left:1212px;top:634px;width:15px;height:125px;background:#ff9da7;"></div>
<div class="a" style="left:1232px;top:634px;width:15px;height:125px;background:#76b7b2;"></div>
<div class="a" style="left:1252px;top:634px;width:15px;height:125px;background:#76b7b2;"></div>
<div class="a" style="left:1252px;top:508px;width:15px;height:126px;background:#76b7b2;"></div>
<div class="a" style="left:1272px;top:634px;width:15px;height:125px;background:#76b7b2;"></div>
<div class="a" style="left:1292px;top:634px;width:15px;height:125px;background:#ebc34a;"></div>
<div class="a" style="left:1292px;top:508px;width:15px;height:126px;background:#76b7b2;"></div>
<div class="a" style="left:1312px;top:634px;width:15px;height:125px;background:#f28e2b;"></div>
<div class="a" style="left:1332px;top:634px;width:15px;height:125px;background:#ff9da7;"></div>
<div class="a" style="left:1352px;top:634px;width:15px;height:125px;background:#76b7b2;"></div>
<div class="a" style="left:1372px;top:634px;width:15px;height:125px;background:#ff9da7;"></div>
<div class="a" style="left:1392px;top:634px;width:15px;height:125px;background:#f28e2b;"></div>
<div class="a" style="left:1412px;top:634px;width:15px;height:125px;background:#76b7b2;"></div>
<div class="a" style="left:1432px;top:634px;width:15px;height:125px;background:#76b7b2;"></div>
<div class="a" style="left:1452px;top:634px;width:15px;height:125px;background:#ebc34a;"></div>
<div class="a" style="left:1472px;top:634px;width:15px;height:125px;background:#ff9da7;"></div>
<div class="a" style="left:1492px;top:634px;width:15px;height:125px;background:#ebc34a;"></div>
<div class="a" style="left:1492px;top:508px;width:15px;height:126px;background:#f28e2b;"></div>
<div class="a" style="left:1512px;top:634px;width:15px;height:125px;background:#f28e2b;"></div>
<div class="a" style="left:1532px;top:634px;width:15px;height:125px;background:#ebc34a;"></div>
<div class="a" style="left:1532px;top:508px;width:15px;height:126px;background:#f28e2b;"></div>
<div class="a" style="left:1552px;top:634px;width:15px;height:125px;background:#f28e2b;"></div>
<div class="a" style="left:1572px;top:634px;width:15px;height:125px;background:#ff9da7;"></div>
<div class="a" style="left:1592px;top:634px;width:15px;height:125px;background:#76b7b2;"></div>
<div class="a" style="left:1612px;top:634px;width:15px;height:125px;background:#f28e2b;"></div>
<div class="a" style="left:1632px;top:634px;width:15px;height:125px;background:#f28e2b;"></div>
<div class="a" style="left:1652px;top:634px;width:15px;height:125px;background:#f28e2b;"></div>
<div class="a" style="left:1672px;top:634px;width:15px;height:125px;background:#76b7b2;"></div>
<div class="a" style="left:1692px;top:634px;width:12px;height:125px;background:#ff9da7;"></div>
<div class="t xl" style="left:551.5px;">Alliance</div>
<div class="t xl" style="left:591.5px;">Altoona</div>
<div class="t xl" style="left:631.5px;">Annandale</div>
<div class="t xl" style="left:671.5px;">Asheville</div>
<div class="t xl" style="left:711.5px;">Astoria</div>
<div class="t xl" style="left:751.5px;">Augusta</div>
<div class="t xl" style="left:791.5px;">Avon</div>
<div class="t xl" style="left:831.5px;">Bayonne</div>
<div class="t xl" style="left:871.5px;">Bel Air</div>
<div class="t xl" style="left:911.5px;">Bethlehem</div>
<div class="t xl" style="left:951.5px;">Billerica</div>
<div class="t xl" style="left:991.5px;">Boynton Beach</div>
<div class="t xl" style="left:1031.5px;">Brooklyn</div>
<div class="t xl" style="left:1071.5px;">Butler</div>
<div class="t xl" style="left:1111.5px;">Canonsburg</div>
<div class="t xl" style="left:1151.5px;">Carrollton</div>
<div class="t xl" style="left:1191.5px;">Cherry Hill</div>
<div class="t xl" style="left:1231.5px;">Cincinnati</div>
<div class="t xl" style="left:1271.5px;">Clarksburg</div>
<div class="t xl" style="left:1311.5px;">Coachella</div>
<div class="t xl" style="left:1351.5px;">Coram</div>
<div class="t xl" style="left:1391.5px;">Cranford</div>
<div class="t xl" style="left:1431.5px;">Crofton</div>
<div class="t xl" style="left:1471.5px;">Danville</div>
<div class="t xl" style="left:1511.5px;">Dedham</div>
<div class="t xl" style="left:1551.5px;">Detroit</div>
<div class="t xl" style="left:1591.5px;">Duluth</div>
<div class="t xl" style="left:1631.5px;">Eastlake</div>
<div class="t xl" style="left:1671.5px;">Elkridge</div>
<div class="a" style="left:529px;top:924px;width:1178px;height:20px;background:#f0f0f0;"></div>
<div class="a" style="left:550px;top:931px;width:289px;height:6px;background:#8a8a8a;"></div>
<div class="a" style="left:1720px;top:181px;width:194px;height:122px;background:#ffffff;box-sizing:border-box;border:1px solid #d4d4d4;"></div>
<div class="a" style="left:1721px;top:182px;width:192px;height:35px;background:#f9f9f9;"></div>
<div class="t" style="top:191.88px;font-size:15.5px;color:#444;left:1728.6px;letter-spacing:0.2px;">Industry</div>
<div class="a" style="left:1724px;top:220px;width:14px;height:14px;background:#f28e2b;"></div>
<div class="t" style="top:219.88px;font-size:15.5px;color:#3a3a3a;left:1743.5px;letter-spacing:0.25px;">Biotechnology</div>
<div class="a" style="left:1724px;top:241px;width:14px;height:14px;background:#76b7b2;"></div>
<div class="t" style="top:240.88px;font-size:15.5px;color:#3a3a3a;left:1743.5px;letter-spacing:0.25px;">Consulting</div>
<div class="a" style="left:1724px;top:262px;width:14px;height:14px;background:#ebc34a;"></div>
<div class="t" style="top:261.88px;font-size:15.5px;color:#3a3a3a;left:1743.5px;letter-spacing:0.25px;">Electronics</div>
<div class="a" style="left:1724px;top:283px;width:14px;height:14px;background:#ff9da7;"></div>
<div class="t" style="top:282.88px;font-size:15.5px;color:#3a3a3a;left:1743.5px;letter-spacing:0.25px;">Hospitality</div>
<div class="a" style="left:0px;top:957px;width:1918px;height:37px;background:#e8e8e8;box-sizing:border-box;border-top:1px solid #d4d4d4;"></div>
<svg class="a" style="left:10px;top:969px;" width="10" height="14" viewBox="0 0 10 14"><path d="M1.5 3v8a3.5 1.7 0 0 0 7 0V3" fill="none" stroke="#777" stroke-width="1.1"/><ellipse cx="5" cy="3" rx="3.5" ry="1.7" fill="none" stroke="#777" stroke-width="1.1"/></svg>
<div class="t" style="top:969.30px;font-size:15px;color:#666;left:24.8px;">Data Source</div>
<div class="a" style="left:162px;top:958px;width:73px;height:36px;background:#f8f8f8;box-sizing:border-box;border-left:1px solid #d4d4d4;border-right:1px solid #d4d4d4;"></div>
<div class="t" style="top:968.30px;font-size:15px;color:#555;font-weight:bold;left:170.4px;">Sheet 1</div>
<div class="a" style="left:266px;top:958px;width:1px;height:36px;background:#d4d4d4;"></div>
<div class="a" style="left:298px;top:958px;width:1px;height:36px;background:#d4d4d4;"></div>
<div class="a" style="left:330px;top:958px;width:1px;height:36px;background:#d4d4d4;"></div>
<svg class="a" style="left:243px;top:967px;" width="18" height="18" viewBox="0 0 18 18"><rect x="1.5" y="2.5" width="10.5" height="10" fill="none" stroke="#666" stroke-width="1.1"/><path d="M4.5 10V8.5M7 10V6M9.5 10V7" stroke="#666" stroke-width="1.1"/><path d="M12.5 8v9M8 12.5h9" stroke="#e8e8e8" stroke-width="4"/><path d="M12.5 9v7.5M8.8 12.8h7.5" stroke="#666" stroke-width="2"/></svg>
<svg class="a" style="left:275px;top:967px;" width="18" height="18" viewBox="0 0 18 18"><g fill="none" stroke="#666" stroke-width="1.1"><rect x="1.5" y="2.5" width="10.5" height="10"/><path d="M6.7 2.5v10M1.5 7.5h10.5"/></g><path d="M12.5 8v9M8 12.5h9" stroke="#e8e8e8" stroke-width="4"/><path d="M12.5 9v7.5M8.8 12.8h7.5" stroke="#666" stroke-width="2"/></svg>
<svg class="a" style="left:307px;top:967px;" width="18" height="18" viewBox="0 0 18 18"><path d="M1.5 3.5l5 1.5 5-2v10l-5 1.5-5-1.5z M6.5 5v9.5" fill="none" stroke="#666" stroke-width="1.1"/><path d="M12.5 8v9M8 12.5h9" stroke="#e8e8e8" stroke-width="4"/><path d="M12.5 9v7.5M8.8 12.8h7.5" stroke="#666" stroke-width="2"/></svg>
<div class="a" style="left:0px;top:994px;width:1918px;height:26px;background:#ebebeb;box-sizing:border-box;border-top:1px solid #d4d4d4;"></div>
<div class="t" style="top:1001.32px;font-size:13.8px;color:#333;left:3.6px;">248 marks</div>
<div class="t" style="top:1001.32px;font-size:13.8px;color:#333;left:90px;">1 row by 221 columns</div>
<div class="t" style="top:1001.32px;font-size:13.8px;color:#333;left:243.4px;">SUM of CNT(Industry): 251</div>
<div class="a" style="left:1501px;top:995px;width:1px;height:25px;background:#cfcfcf;"></div>
<div class="a" style="left:1658px;top:995px;width:1px;height:25px;background:#cfcfcf;"></div>
<div class="a" style="left:1690px;top:995px;width:1px;height:25px;background:#cfcfcf;"></div>
<div class="a" style="left:1722px;top:995px;width:1px;height:25px;background:#cfcfcf;"></div>
<div class="a" style="left:1779px;top:995px;width:1px;height:25px;background:#cfcfcf;"></div>
<div class="a" style="left:1850px;top:995px;width:1px;height:25px;background:#cfcfcf;"></div>
<svg class="a" style="left:1786px;top:1001px;" width="60" height="11" viewBox="0 0 60 11"><g fill="#b0b0b0"><rect x="2" y="1.5" width="1.3" height="8"/><path d="M3.5 5.5l5.5-4v8z"/><path d="M18 5.5l5.5-4v8z"/><path d="M34 1.5l5 4-5 4z"/><path d="M49.5 1.5l5.5 4-5.5 4z"/><rect x="55.5" y="1.5" width="1.3" height="8"/></g></svg>
<svg class="a" style="left:1858px;top:1000px;" width="14" height="14" viewBox="0 0 14 14"><g fill="#a8a8a8"><rect x="1" y="1" width="3" height="3"/><rect x="5.5" y="1" width="3" height="3"/><rect x="10" y="1" width="3" height="3"/><rect x="1" y="5.5" width="3" height="3"/><rect x="5.5" y="5.5" width="3" height="3"/><rect x="10" y="5.5" width="3" height="3"/><rect x="1" y="10" width="3" height="3"/><rect x="5.5" y="10" width="3" height="3"/><rect x="10" y="10" width="3" height="3"/></g></svg>
<svg class="a" style="left:1880px;top:1000px;" width="14" height="14" viewBox="0 0 14 14"><g fill="#a8a8a8"><rect x="1" y="1" width="12" height="8"/><rect x="1" y="10" width="3" height="3"/><rect x="5.5" y="10" width="3" height="3"/><rect x="10" y="10" width="3" height="3"/></g></svg>
<div class="a" style="left:1902.5px;top:1001px;width:12px;height:11px;background:#5a5a5a;"></div>
</body></html>
